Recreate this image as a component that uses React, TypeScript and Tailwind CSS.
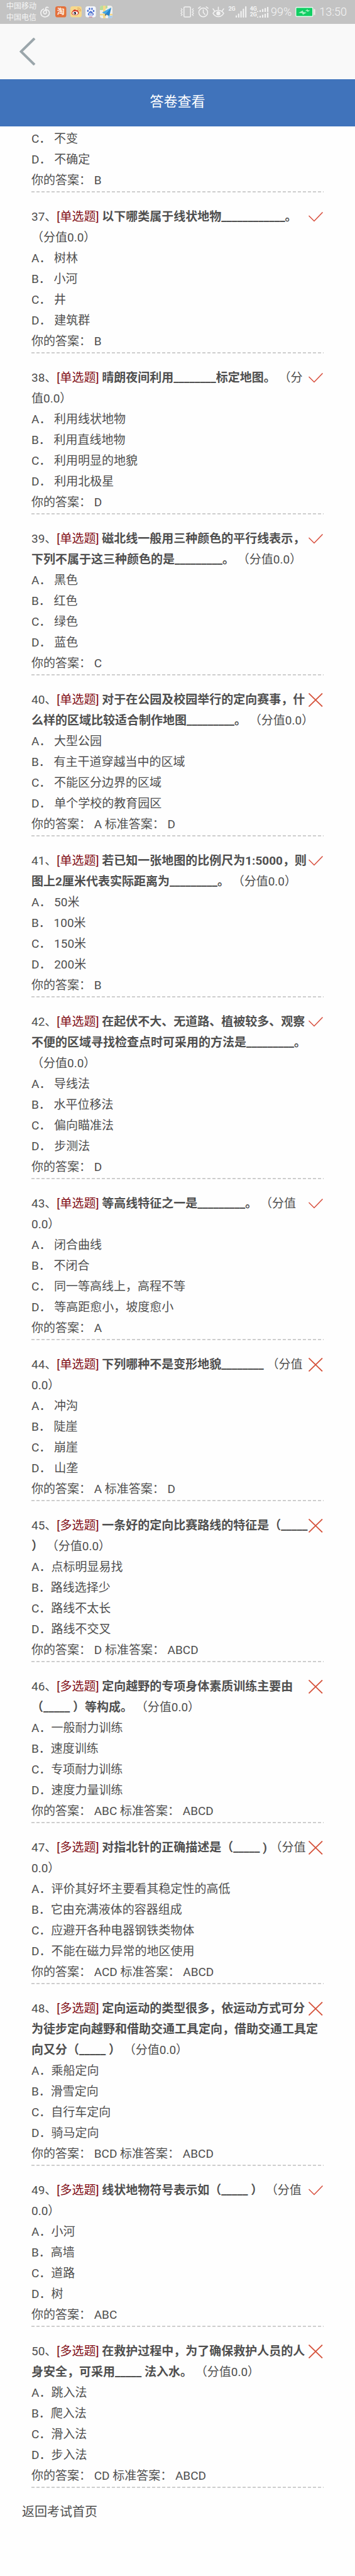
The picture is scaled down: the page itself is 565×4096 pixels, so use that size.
import React from "react";

type Question = {
  no: number;
  kind: "单选题" | "多选题";
  title: string;
  options: string[];
  answer: string;
  standard?: string;
};

const questions: Question[] = [
  { no: 37, kind: "单选题", title: "以下哪类属于线状地物____________。", options: ["A． 树林", "B． 小河", "C． 井", "D． 建筑群"], answer: "B" },
  { no: 38, kind: "单选题", title: "晴朗夜间利用________标定地图。", options: ["A． 利用线状地物", "B． 利用直线地物", "C． 利用明显的地貌", "D． 利用北极星"], answer: "D" },
  { no: 39, kind: "单选题", title: "磁北线一般用三种颜色的平行线表示，下列不属于这三种颜色的是_________。", options: ["A． 黑色", "B． 红色", "C． 绿色", "D． 蓝色"], answer: "C" },
  { no: 40, kind: "单选题", title: "对于在公园及校园举行的定向赛事，什么样的区域比较适合制作地图_________。", options: ["A． 大型公园", "B． 有主干道穿越当中的区域", "C． 不能区分边界的区域", "D． 单个学校的教育园区"], answer: "A", standard: "D" },
  { no: 41, kind: "单选题", title: "若已知一张地图的比例尺为1:5000，则图上2厘米代表实际距离为_________。", options: ["A． 50米", "B． 100米", "C． 150米", "D． 200米"], answer: "B" },
  { no: 42, kind: "单选题", title: "在起伏不大、无道路、植被较多、观察不便的区域寻找检查点时可采用的方法是_________。", options: ["A． 导线法", "B． 水平位移法", "C． 偏向瞄准法", "D． 步测法"], answer: "D" },
  { no: 43, kind: "单选题", title: "等高线特征之一是_________。", options: ["A． 闭合曲线", "B． 不闭合", "C． 同一等高线上，高程不等", "D． 等高距愈小，坡度愈小"], answer: "A" },
  { no: 44, kind: "单选题", title: "下列哪种不是变形地貌________", options: ["A． 冲沟", "B． 陡崖", "C． 崩崖", "D． 山垄"], answer: "A", standard: "D" },
  { no: 45, kind: "多选题", title: "一条好的定向比赛路线的特征是（_____ ）", options: ["A．点标明显易找", "B．路线选择少", "C．路线不太长", "D．路线不交叉"], answer: "D", standard: "ABCD" },
  { no: 46, kind: "多选题", title: "定向越野的专项身体素质训练主要由（_____ ）等构成。", options: ["A．一般耐力训练", "B．速度训练", "C．专项耐力训练", "D．速度力量训练"], answer: "ABC", standard: "ABCD" },
  { no: 47, kind: "多选题", title: "对指北针的正确描述是（_____ )", options: ["A．评价其好坏主要看其稳定性的高低", "B．它由充满液体的容器组成", "C．应避开各种电器钢铁类物体", "D．不能在磁力异常的地区使用"], answer: "ACD", standard: "ABCD" },
  { no: 48, kind: "多选题", title: "定向运动的类型很多，依运动方式可分为徒步定向越野和借助交通工具定向，借助交通工具定向又分（_____ ）", options: ["A．乘船定向", "B．滑雪定向", "C．自行车定向", "D．骑马定向"], answer: "BCD", standard: "ABCD" },
  { no: 49, kind: "多选题", title: "线状地物符号表示如（_____ ）", options: ["A．小河", "B．高墙", "C．道路", "D．树"], answer: "ABC" },
  { no: 50, kind: "多选题", title: "在救护过程中，为了确保救护人员的人身安全，可采用_____ 法入水。", options: ["A．跳入法", "B．爬入法", "C．滑入法", "D．步入法"], answer: "CD", standard: "ABCD" },
];

function Divider() {
  return <div className="mt-px h-[2px] bg-[repeating-linear-gradient(90deg,#cecece_0,#cecece_5px,transparent_5px,transparent_8px)]" />;
}

function Check() {
  return (
    <svg viewBox="0 0 24 22" className="h-[22px] w-6" fill="none" stroke="#d8503f" strokeWidth="1.5" aria-label="正确">
      <path d="M0.5 9 L9 17.5 L22.5 3.5" />
    </svg>
  );
}

function Cross() {
  return (
    <svg viewBox="0 0 24 22" className="h-[22px] w-6" fill="none" stroke="#d5513a" strokeWidth="1.8" aria-label="错误">
      <path d="M0.5 0.5 L22 21.5 M22 0.5 L0.5 21.5" />
    </svg>
  );
}

function QuestionBlock({ q }: { q: Question }) {
  return (
    <li className="pt-[22px]">
      <div className="float-right flex h-[33px] w-6 items-center">{q.standard ? <Cross /> : <Check />}</div>
      <h2>
        {`${q.no}、`}
        <span className="text-[#800a12]">{`[${q.kind}]`}</span> <b className="font-bold">{q.title}</b> （分值0.0）
      </h2>
      {q.options.map((o) => (
        <p key={o}>{o}</p>
      ))}
      <p>{q.standard ? `你的答案： ${q.answer} 标准答案： ${q.standard}` : `你的答案： ${q.answer}`}</p>
      <Divider />
    </li>
  );
}

function AppIcons() {
  return (
    <div className="flex items-center gap-[6px]">
      <svg viewBox="0 0 16 18" className="mr-[2px] h-[18px] w-4" fill="none" stroke="#f4f4f4" strokeWidth="1.6" strokeLinecap="round" aria-hidden="true">
        <path d="M5.6 4.2 C0.5 6 -0.6 12.5 3.4 15.6 C7.6 18.4 14.4 16 14.6 10.6 C14.6 7 11.6 5.2 9 5.6 C5.6 6.2 4.4 9.6 6 11.4 C7.6 13 10.2 12 9.9 9.6 L8.8 4 C8.6 1.4 10.8 0.6 12.6 2" />
      </svg>
      <svg viewBox="0 0 18 18" className="h-[18px] w-[18px]" aria-hidden="true">
        <rect width="17.5" height="17.5" rx="3.6" fill="#e3703a" />
        <text x="8.8" y="13.2" textAnchor="middle" fontSize="12" fontWeight="700" fill="#fff4e8" fontFamily="Noto Sans CJK SC, sans-serif">淘</text>
      </svg>
      <svg viewBox="0 0 18 18" className="h-[18px] w-[18px]" aria-hidden="true">
        <rect width="18" height="17.6" rx="3.6" fill="#f6d88b" />
        <path d="M2 11 C2.5 7.5 6.5 4 8.2 5.2 C9 5.8 8.6 6.6 8.6 6.6 C11 5.6 13 6 12.4 8.2 C15 9.4 13.6 13.8 8.4 14.2 C4.6 14.4 1.8 13 2 11Z" fill="#d33a2c" />
        <ellipse cx="7.6" cy="10.8" rx="4.4" ry="2.8" fill="#fff" />
        <circle cx="7.2" cy="11" r="2" fill="#1c1f2a" />
        <circle cx="6.6" cy="11.4" r="0.6" fill="#fff" />
        <path d="M11.8 4.8 C13.4 4.6 14.6 5.8 14.2 7.4 M11.6 2.8 C14.6 2.2 17 4.8 16 7.8" fill="none" stroke="#e29a4b" strokeWidth="1" strokeLinecap="round" />
      </svg>
      <svg viewBox="0 0 17 18" className="h-[18px] w-[17px]" aria-hidden="true">
        <rect width="16.6" height="17.6" rx="3.6" fill="#f3f6fb" />
        <g fill="#4a6fd0">
          <ellipse cx="3.9" cy="7.2" rx="1.3" ry="1.7" />
          <ellipse cx="6.5" cy="4.1" rx="1.3" ry="1.8" />
          <ellipse cx="10.4" cy="4.1" rx="1.3" ry="1.8" />
          <ellipse cx="13" cy="7.4" rx="1.3" ry="1.7" />
          <path d="M8.4 7.6 C10.4 7.6 10.6 9.6 12.4 11 C14 12.6 12.6 15 10.4 14.6 C9 14.3 7.8 14.3 6.6 14.6 C4.2 15 3 12.6 4.6 11 C6.2 9.6 6.4 7.6 8.4 7.6Z" />
        </g>
        <text x="8.4" y="13.7" textAnchor="middle" fontSize="5" fontWeight="700" fill="#fff" fontFamily="Roboto, sans-serif">du</text>
        <rect x="5.6" y="16.4" width="5.4" height="1.2" fill="#c26d8b" />
      </svg>
      <svg viewBox="0 0 20 20" className="h-5 w-5" aria-hidden="true">
        <rect width="20" height="20" rx="4" fill="#efefec" />
        <path d="M0 4 Q0 0 4 0 H12 V4 L4 7 H0Z" fill="#b9dc9a" />
        <path d="M5 0 H9 V20 H5Z M0 13 H20 V15.5 H0Z" fill="#f5d98a" />
        <path d="M13 16 H20 Q20 20 16 20 H13Z" fill="#a9cdee" />
        <path d="M18 3 L3.4 11 L8.4 13.2Z" fill="#45a9e6" />
        <path d="M18 3 L8.4 13.2 L15 16.4Z" fill="#2484cf" />
        <path d="M8.4 13.2 L8 16.4 L10.6 14.2Z" fill="#4d5c66" />
      </svg>
    </div>
  );
}

function Bars({ className }: { className: string }) {
  return (
    <svg viewBox="0 0 19 18" preserveAspectRatio="none" className={className} fill="#f2f2f2" aria-hidden="true">
      <rect x="0" y="14.5" width="2.2" height="3.5" rx="0.8" />
      <rect x="4" y="11.5" width="2.2" height="6.5" rx="0.8" />
      <rect x="8" y="7.5" width="2.2" height="10.5" rx="0.8" />
      <rect x="12" y="3.8" width="2.2" height="14.2" rx="0.8" />
      <rect x="16" y="0" width="2.2" height="18" rx="0.8" />
    </svg>
  );
}

function StatusBar() {
  return (
    <div className="flex h-[38px] items-center justify-between bg-[#c3c3c3] pr-[13px] pl-[10px] text-[#f5f5f5]">
      <div className="flex items-center gap-[6px]">
        <div className="text-[12px] leading-[18px]">
          <div>中国移动</div>
          <div>中国电信</div>
        </div>
        <AppIcons />
      </div>
      <div className="flex items-center">
        <div className="flex items-center gap-[6px]">
          <svg viewBox="0 0 22 18" className="h-[18px] w-[22px]" fill="none" stroke="#f2f2f2" strokeWidth="1.5" aria-hidden="true">
            <rect x="5.8" y="0.9" width="10.4" height="16.2" rx="1.4" />
            <path d="M1 3.5 L3 5.2 L1 7.2 L3 9.2 L1 11.2 L3 13.2 L1 15 M21 3.5 L19 5.2 L21 7.2 L19 9.2 L21 11.2 L19 13.2 L21 15" strokeWidth="1.2" />
          </svg>
          <svg viewBox="0 0 17 18" className="h-[18px] w-[17px]" fill="none" stroke="#f2f2f2" strokeWidth="1.5" strokeLinecap="round" aria-hidden="true">
            <circle cx="8.5" cy="9.8" r="7" />
            <path d="M8.5 5.6 V10 L11.2 13 M0.9 3.2 L3.8 0.9 M16.1 3.2 L13.2 0.9" />
          </svg>
          <svg viewBox="0 0 19 18" className="h-[18px] w-[19px]" fill="none" stroke="#f2f2f2" strokeWidth="1.5" strokeLinecap="round" aria-hidden="true">
            <path d="M1 11.2 C5 5 14 5 18 11.2 C14 18.4 5 18.4 1 11.2Z M9.5 1.2 V5 M1 4 L3.4 7.2 M18 4 L15.6 7.2" />
            <circle cx="9.5" cy="11.2" r="3.2" fill="#f2f2f2" stroke="none" />
          </svg>
        </div>
        <div className="ml-[6px] flex h-[18px] items-start">
          <span className="text-[9px] leading-[9px] font-bold">2G</span>
          <Bars className="h-[18px] w-[18px]" />
        </div>
        <div className="ml-[5px] flex flex-col">
          <div className="flex items-center">
            <span className="text-[9px] leading-[9px] font-bold">4G</span>
            <Bars className="h-2 w-[19px]" />
          </div>
          <div className="flex items-center">
            <span className="text-[9px] leading-[9px] font-bold">2G</span>
            <Bars className="h-2 w-[19px]" />
          </div>
        </div>
        <span className="ml-[3px] text-[18px] leading-[22px] font-light">99%</span>
        <svg viewBox="0 0 32 16" className="ml-[6px] h-4 w-8" aria-hidden="true">
          <rect x="0.8" y="0.8" width="27" height="14.4" rx="1.6" fill="#0fce62" stroke="#e9f7ee" strokeWidth="1.4" />
          <path d="M5 9.5 L12 5.5 L12.5 8 L18 9 L12 12.5 L11 10Z M15.5 6.5 L19.5 3.6 L20 5.2 L23.5 5.6 L19.5 8 L18.8 6.6Z" fill="#9ff0bf" />
          <rect x="29.4" y="3.4" width="2.2" height="9.4" rx="0.6" fill="#f4ecec" />
        </svg>
        <span className="ml-[6px] text-[18px] leading-[22px] font-light">13:50</span>
      </div>
    </div>
  );
}

export default function App() {
  return (
    <div lang="zh-CN" className="min-h-screen bg-[#fefefe] font-['Roboto','Noto_Sans_CJK_SC',sans-serif] text-[#4f4f4f]">
      <StatusBar />
      <nav className="flex h-[88px] items-center bg-[#f9f9f9] pl-[31px]">
        <button type="button" aria-label="返回" className="block">
          <svg viewBox="0 0 26 44" className="h-11 w-[26px]" fill="none" stroke="#9ba6ab" strokeWidth="4">
            <path d="M24 1 L2.5 22 L24 43" />
          </svg>
        </button>
      </nav>
      <header className="flex h-[75px] items-center justify-center bg-[#4073bb] pb-1">
        <h1 className="text-[22px] leading-8 text-white">答卷查看</h1>
      </header>
      <main className="px-[50px] pt-[3px] text-[19px] leading-[33px]">
        <p>C． 不变</p>
        <p>D． 不确定</p>
        <p>你的答案： B</p>
        <Divider />
        <ul>
          {questions.map((q) => (
            <QuestionBlock key={q.no} q={q} />
          ))}
        </ul>
      </main>
      <footer className="px-[35px] pt-5 pb-8 text-[20px] leading-9">
        <a href="#home">返回考试首页</a>
      </footer>
    </div>
  );
}
